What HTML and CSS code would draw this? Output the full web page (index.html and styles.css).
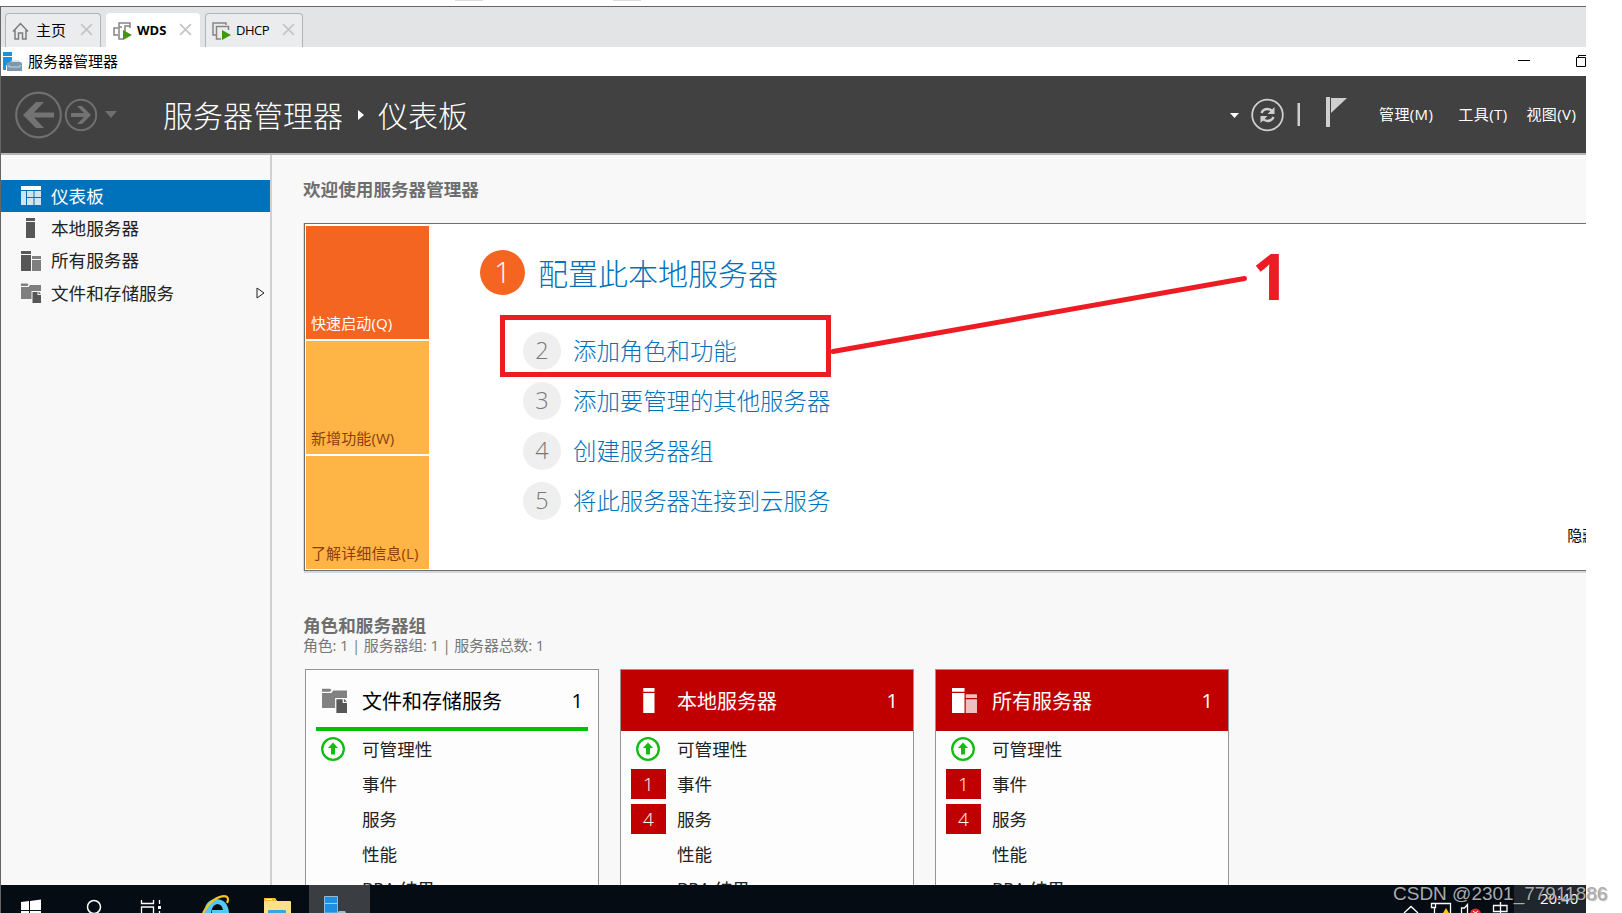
FILE: index.html
```html
<!DOCTYPE html>
<html lang="zh-CN">
    <head>
        <meta charset="utf-8">
        <title>服务器管理器</title>
        <link rel="stylesheet" href="styles.css">
    </head>
    <body>
        <svg class="symbols" width="0" height="0">
            <symbol id="server" viewBox="0 0 20 20">
                <path d="M5 0h9v3H5zM5 4h9v16H5z"/>
            </symbol>
            <symbol id="servers" viewBox="0 0 20 20">
                <path d="M0 0h10v3H0zM0 4h10v16H0z"/>
                <path opacity=".75" d="M11 5h9v3h-9zM11 9h9v11h-9z"/>
            </symbol>
            <symbol id="files" viewBox="0 0 20 20">
                <path opacity=".75" d="M0 .5h6.500l1 1-1 1.500H0zM0 4h7.500l1.500-2h11v6h-9.500v8H0z"/>
                <path d="M11.500 9h5v3H20v8h-8.500zM17.500 8.500l2.500 2.500h-2.500z"/>
            </symbol>
            <symbol id="close" viewBox="0 0 12 12">
                <path d="M1 1l10 10M11 1L1 11" fill="none" stroke="#c6c6c8" stroke-width="1.700"/>
            </symbol>
            <symbol id="up" viewBox="0 0 24 24">
                <circle cx="12" cy="12" r="10.800" fill="#fff" stroke="#10bd10" stroke-width="2.300"/>
                <path d="M12 5.500l5 5.500h-3v6.500h-4V11H7z" fill="#10bd10"/>
            </symbol>
        </svg>

        <div class="scraps"><span></span><span></span></div>

        <div class="window">
            <div class="tabs">
                <div class="tab tab-home">
                    <svg width="17" height="18" viewBox="0 0 17 18"><path d="M1 9.500L8.500 1.500 16 9.500M3 8v9h3.500v-6h4v6H14V8" fill="none" stroke="#7c7c7c" stroke-width="1.500"/></svg>
                    <span class="tab-name">主页</span>
                    <svg class="close" width="13" height="13"><use href="#close"/></svg>
                </div>
                <div class="tab tab-wds active">
                    <svg width="19" height="18" viewBox="0 0 19 18"><g fill="none" stroke="#858585" stroke-width="1.500"><path d="M5 13H1V6h4M6 5V1h11v5M10 17H6V5h3"/><path d="M17 4h-5v6"/></g><path d="M10 8l9 5-9 5z" fill="#3f9a0f"/></svg>
                    <span class="tab-name">WDS</span>
                    <svg class="close" width="13" height="13"><use href="#close"/></svg>
                </div>
                <div class="tab tab-dhcp">
                    <svg width="19" height="18" viewBox="0 0 19 18"><g fill="none" stroke="#858585" stroke-width="1.500"><path d="M4 13H1V1h13v2"/><path d="M9 17H4.500V4.500h12V8"/></g><path d="M10 8l9 5-9 5z" fill="#3f9a0f"/></svg>
                    <span class="tab-name">DHCP</span>
                    <svg class="close" width="13" height="13"><use href="#close"/></svg>
                </div>
            </div>

            <div class="titlebar">
                <svg width="20" height="20" viewBox="0 0 20 20"><path d="M0 0h9v4H0zM0 5h9v6H5L3 14v4H0z" fill="#1e8fdd"/><path d="M8 11V9h8v2" fill="none" stroke="#b9c7d2"/><path d="M4 12q0-2 2-2h11q2 0 2 2v7H4z" fill="#7c98ac"/><path d="M6 13v2h11v-2" fill="none" stroke="#c9d6df"/></svg>
                <span class="titlebar-name">服务器管理器</span>
                <svg class="minimize" width="12" height="10" viewBox="0 0 12 10"><path d="M0 3.500h12" stroke="#000"/></svg>
                <svg class="restore" width="10" height="14" viewBox="0 0 10 14"><path d="M.5 2.500h9v9h-9zM2.500 2.500v-2H10" fill="none" stroke="#000"/></svg>
            </div>

            <div class="header">
                <svg class="nav" width="110" height="50" viewBox="0 0 110 50">
                    <g fill="none" stroke="#6f6f6f">
                        <circle cx="25.500" cy="25" r="22.300" stroke-width="2.200"/>
                        <circle cx="68" cy="25" r="15.200" stroke-width="2"/>
                    </g>
                    <path d="M10 25l13-13h8L21 22.500h20v5H21L31 38h-8z" fill="#737373"/>
                    <path d="M78 25l-9 9h-5l7-7H58v-4h13l-7-7h5z" fill="#737373"/>
                    <path d="M92 21h12l-6 7z" fill="#6f6f6f"/>
                </svg>
                <div class="crumbs">
                    <span>服务器管理器</span>
                    <svg width="6" height="10" viewBox="0 0 6 10"><path d="M0 0l6 5-6 5z" fill="#fff"/></svg>
                    <span>仪表板</span>
                </div>
                <svg class="tools" width="120" height="40" viewBox="0 0 120 40">
                    <path d="M0 18h9l-4.500 5z" fill="#fff"/>
                    <circle cx="37.500" cy="20" r="15.300" fill="none" stroke="#cfcfcf" stroke-width="1.800"/>
                    <g fill="none" stroke="#cfcfcf" stroke-width="2.500"><path d="M31.500 18q1.500-4 6-4 3 0 5 2.500M43.500 22q-1.500 4-6 4-3 0-5-2.500"/></g>
                    <path d="M44.500 12v7h-7zM30.500 28v-7h7z" fill="#cfcfcf"/>
                    <path d="M67.500 8H70v23h-2.500z" fill="#cfcfcf"/>
                    <path d="M96 2h4v30h-4zM101 3h16l-16 15z" fill="#cfcfcf"/>
                </svg>
                <div class="menu">
                    <span>管理(M)</span>
                    <span>工具(T)</span>
                    <span>视图(V)</span>
                </div>
            </div>

            <div class="body">
                <div class="sidebar">
                    <div class="side-item selected">
                        <svg width="20" height="20" viewBox="0 0 20 20"><path d="M0 0h20v4H0z" fill="#fff"/><path d="M0 5h5v14H0zM6 5h6.500v6H6zM13.500 5H20v6h-6.500zM6 12h6.500v7H6zM13.500 12H20v7h-6.500z" fill="#cfe5f4"/></svg>
                        <span>仪表板</span>
                    </div>
                    <div class="side-item">
                        <svg width="20" height="20"><use href="#server"/></svg>
                        <span>本地服务器</span>
                    </div>
                    <div class="side-item">
                        <svg width="20" height="20"><use href="#servers"/></svg>
                        <span>所有服务器</span>
                    </div>
                    <div class="side-item">
                        <svg width="20" height="20"><use href="#files"/></svg>
                        <span>文件和存储服务</span>
                        <svg class="expand" width="9" height="12" viewBox="0 0 9 12"><path d="M1 1l7 5-7 5z" fill="none" stroke="#222"/></svg>
                    </div>
                </div>

                <div class="main">
                    <h2>欢迎使用服务器管理器</h2>
                    <div class="welcome">
                        <div class="tiles">
                            <div class="tile quick">快速启动(Q)</div>
                            <div class="tile">新增功能(W)</div>
                            <div class="tile">了解详细信息(L)</div>
                        </div>
                        <div class="steps">
                            <div class="step first"><b>1</b><span>配置此本地服务器</span></div>
                            <div class="step"><b>2</b><span>添加角色和功能</span></div>
                            <div class="step"><b>3</b><span>添加要管理的其他服务器</span></div>
                            <div class="step"><b>4</b><span>创建服务器组</span></div>
                            <div class="step"><b>5</b><span>将此服务器连接到云服务</span></div>
                        </div>
                        <span class="hide">隐藏</span>
                    </div>

                    <h2 class="groups-title">角色和服务器组</h2>
                    <p class="groups-info">角色: 1 | 服务器组: 1 | 服务器总数: 1</p>
                    <div class="cards">
                        <div class="card ok">
                            <div class="card-head"><svg width="25" height="25"><use href="#files"/></svg><span>文件和存储服务</span><span class="count">1</span></div>
                            <div class="row"><i><svg width="24" height="24"><use href="#up"/></svg></i><span>可管理性</span></div>
                            <div class="row"><i></i><span>事件</span></div>
                            <div class="row"><i></i><span>服务</span></div>
                            <div class="row"><i></i><span>性能</span></div>
                            <div class="row"><i></i><span>BPA 结果</span></div>
                        </div>
                        <div class="card">
                            <div class="card-head"><svg width="25" height="25"><use href="#server"/></svg><span>本地服务器</span><span class="count">1</span></div>
                            <div class="row"><i><svg width="24" height="24"><use href="#up"/></svg></i><span>可管理性</span></div>
                            <div class="row"><i class="alert">1</i><span>事件</span></div>
                            <div class="row"><i class="alert">4</i><span>服务</span></div>
                            <div class="row"><i></i><span>性能</span></div>
                            <div class="row"><i></i><span>BPA 结果</span></div>
                        </div>
                        <div class="card">
                            <div class="card-head"><svg width="25" height="25"><use href="#servers"/></svg><span>所有服务器</span><span class="count">1</span></div>
                            <div class="row"><i><svg width="24" height="24"><use href="#up"/></svg></i><span>可管理性</span></div>
                            <div class="row"><i class="alert">1</i><span>事件</span></div>
                            <div class="row"><i class="alert">4</i><span>服务</span></div>
                            <div class="row"><i></i><span>性能</span></div>
                            <div class="row"><i></i><span>BPA 结果</span></div>
                        </div>
                    </div>
                </div>
            </div>

            <div class="taskbar">
                <svg width="308" height="28" viewBox="1 0 308 28">
                    <path d="M21 17l8-1v9h-8zM30 16l11-1.500V25H30zM21 26h8v2h-8zM30 26h11v2H30z" fill="#fff"/>
                    <circle cx="94" cy="22" r="6.500" fill="none" stroke="#fff" stroke-width="1.500"/>
                    <path d="M141.500 15v3.500h12V15M141.500 28v-6h12v6M159.500 15v4M159.500 26v2" fill="none" stroke="#fff" stroke-width="1.300"/>
                    <path d="M158 21h3v3h-3z" fill="#fff"/>
                    <path d="M204 28q1-14 13-14 11 1 12 14h-17v-3h11q-1-6-6-6-5 1-6 9z" fill="#55c8f2"/>
                    <path d="M203 28q6-11 14-15 7-3 10-1 2 2 0 6" fill="none" stroke="#f6c521" stroke-width="2.200"/>
                    <path d="M264 14q0-1 1-1h10l2 3h13q1 0 1 1v11h-27z" fill="#ffe08a"/>
                    <path d="M264 13h11l2 3h-13z" fill="#f3bd32"/>
                    <path d="M266 14.500h6" stroke="#fff"/>
                    <path d="M268 28v-2q0-1 1-1h16q1 0 1 1v2z" fill="#35a7dc"/>
                </svg>
                <div class="running">
                    <svg width="24" height="17" viewBox="0 0 24 17"><path d="M.5.5h13V17H.5z" fill="#1f8fe0" stroke="#8fbbd9"/><path d="M1 7.500h12" stroke="#9fd0ef"/><path d="M13 17l2-2h6l1 2z" fill="#a7bac6"/></svg>
                </div>
                <svg class="tray" width="110" height="28" viewBox="1400 0 110 28">
                    <g fill="none" stroke="#fff" stroke-width="1.300">
                        <path d="M1404 28l7-6.500 7 6.500"/>
                        <path d="M1436 18.500h14.500V28M1434.500 23v5M1431.500 18.500h4v4h-4z"/>
                        <path d="M1461.500 28v-5h3l3-3.500V28"/>
                        <path d="M1493.500 20.500h13.500v6h-13.500zM1500.500 17v11"/>
                    </g>
                    <path d="M1446 23l3 5h-6z" fill="#ffc20e"/>
                    <circle cx="1475.500" cy="29" r="5.500" fill="#e02b35"/>
                    <path d="M1473 26l5 4M1478 26l-5 4" stroke="#fff"/>
                </svg>
                <div class="clock">20:40</div>
            </div>
        </div>

        <!-- red marks drawn over the window -->
        <div class="mark-box"></div>
        <svg class="mark-line" width="422" height="84" viewBox="0 0 422 84"><path d="M5 78.500L416.500 5.500" stroke="#ed1c24" stroke-width="5" stroke-linecap="round"/></svg>
        <div class="mark-number">1</div>
        <div class="watermark">CSDN @2301_77911886</div>
    </body>
</html>
```
FILE: styles.css
```css
* {
    box-sizing: border-box;
}
body {
    margin: 0;
    width: 1622px;
    height: 913px;
    overflow: hidden;
    position: relative;
    background: #fff;
    font-family: "Open Sans", "Noto Sans CJK SC", sans-serif;
    color: #000;
}
svg {
    display: block;
    flex: none;
}
.symbols {
    position: absolute;
}
span {
    white-space: nowrap;
}
.scraps {
    display: flex;
    gap: 130px;
    height: 6px;
    padding-left: 455px;
}
.scraps span {
    width: 28px;
    height: 1px;
    background: #dcdcdc;
}

.window {
    width: 1586px;
    height: 907px;
    overflow: hidden;
    display: flex;
    flex-direction: column;
    border-left: 1px solid #666;
    border-top: 1px solid #666;
}

/* tabs */
.tabs {
    display: flex;
    align-items: flex-end;
    height: 40px;
    padding-left: 4px;
    background: #e3e4e6;
}
.tab {
    display: flex;
    align-items: center;
    height: 34px;
    padding: 0 7px;
    border: 1px solid #b2b3b5;
    border-bottom: 0;
    border-radius: 4px 4px 0 0;
    background: #ebecee;
    font-size: 13px;
}
.tab-home {
    width: 96px;
    margin-right: 5px;
    padding-left: 6px;
}
.tab-home .tab-name {
    margin-left: 7px;
    font-size: 15px;
}
.tab-wds {
    width: 94px;
    margin-right: 5px;
    padding: 0 7px 0 6px;
    font-weight: bold;
}
.tab-dhcp {
    width: 98px;
    padding-left: 6px;
}
.tab-dhcp .tab-name {
    letter-spacing: -0.5px;
}
.tab.active {
    background: #fff;
    border-color: #fff;
}
.tab-name {
    margin-left: 5px;
    padding-bottom: 2px;
    line-height: 20px;
}
.tab .close {
    margin-left: auto;
    margin-bottom: 2px;
}

.titlebar {
    display: flex;
    align-items: center;
    height: 29px;
    padding-left: 2px;
    font-size: 15px;
    flex: none;
}
.titlebar-name {
    margin-left: 5px;
    padding-bottom: 2px;
    line-height: 20px;
}
.minimize {
    margin-left: auto;
    margin-right: 46px;
}

/* dark header */
.header {
    display: flex;
    align-items: center;
    height: 79px;
    flex: none;
    padding: 0 10px 0 12px;
    background: #414141;
    border-bottom: 2px solid #b5b5b5;
    color: #fff;
}
.crumbs {
    display: flex;
    align-items: center;
    margin-left: 40px;
    font-size: 30px;
    font-weight: 300;
    line-height: 40px;
}
.crumbs span {
    padding-top: 2px;
}
.crumbs svg {
    margin: 0 14px 0 15px;
}
.tools {
    margin-left: auto;
    margin-right: 29px;
}
.menu {
    display: flex;
    width: 197px;
    gap: 25px;
    padding-bottom: 2px;
    font-size: 15px;
    letter-spacing: 0.4px;
}
.menu span:last-child {
    margin-left: -6px;
}

.body {
    display: flex;
    height: 730px;
    flex: none;
    background: #f8f8f8;
}
.sidebar {
    width: 271px;
    flex: none;
    padding-top: 25px;
    border-right: 2px solid #d0d0d0;
}
.side-item {
    display: flex;
    align-items: center;
    height: 32.3px;
    padding: 0 5px 0 20px;
    font-size: 17.6px;
    color: #222;
    fill: #575757;
}
.side-item span {
    margin-left: 10px;
    padding-bottom: 1.5px;
}
.side-item.selected {
    background: #0072bc;
    color: #fff;
}
.expand {
    margin-left: auto;
}

.main {
    flex: 1;
    min-width: 0;
    padding: 21px 0 0 31px;
}
h2 {
    margin: 0;
    font-size: 17.6px;
    line-height: 26px;
    color: #6e6e6e;
}
.welcome {
    display: flex;
    width: 1400px;
    height: 348px;
    margin: 21px 0 0 1px;
    padding: 2px 1px 1px;
    background: #fff;
    border: 1px solid #6e6e6e;
    box-shadow: 0 2px 0 #d8d8d8, -1px 0 0 #d8d8d8;
}
.tiles {
    display: flex;
    flex-direction: column;
    gap: 2px;
    width: 123px;
}
.tile {
    display: flex;
    flex: 1;
    align-items: flex-end;
    padding: 0 0 5px 5px;
    background: #ffb445;
    color: #8b3e0d;
    font-size: 15px;
    line-height: 22px;
    letter-spacing: 0.1px;
    white-space: nowrap;
}
.tile.quick {
    background: #f46522;
    color: #fff;
}
.steps {
    padding: 24px 0 0 51px;
    color: #0072bc;
    font-weight: 300;
}
.step {
    display: flex;
    align-items: center;
    height: 50px;
    padding-left: 43px;
    font-size: 23.4px;
}
.step span {
    padding-bottom: 2px;
}
.step b {
    width: 38px;
    height: 38px;
    margin-right: 12px;
    border-radius: 50%;
    background: #efefef;
    color: #777;
    font-weight: 300;
    line-height: 37px;
    text-align: center;
}
.step.first {
    height: 45px;
    margin-bottom: 31px;
    padding-left: 0;
    font-size: 30px;
}
.step.first b {
    width: 45px;
    height: 45px;
    margin-right: 13px;
    background: #f46522;
    color: #fff;
    line-height: 44px;
}
.hide {
    margin: 298px 0 0 737px;
    font-size: 15px;
    line-height: 22px;
}

.groups-title {
    margin-top: 41px;
}
.groups-info {
    margin: -3px 0 0;
    font-size: 15px;
    line-height: 20px;
    letter-spacing: -0.2px;
    color: #777;
}
.cards {
    display: flex;
    gap: 21px;
    margin: 14px 0 0 2px;
}
.card {
    width: 294px;
    height: 260px;
    border: 1px solid #969696;
    background: #fdfdfd;
}
.card-head {
    display: flex;
    align-items: center;
    height: 61px;
    padding: 0 15px 0 16px;
    background: #c00000;
    color: #fff;
    fill: #fff;
    font-size: 20px;
}
.card-head span {
    margin-left: 15px;
}
.card-head .count {
    margin-left: auto;
}
.card.ok .card-head {
    margin: 0 10px;
    padding: 4px 5px 0 6px;
    background: none;
    border-bottom: 4px solid #00c000;
    color: #000;
    fill: #575757;
}
.row {
    display: flex;
    align-items: center;
    height: 35px;
    padding-left: 10px;
    font-size: 17.6px;
    color: #222;
}
.row i {
    width: 35px;
    height: 30px;
    margin-right: 11px;
    padding: 3px 5px;
    font-style: normal;
}
.row i.alert {
    padding: 0;
    background: #c00000;
    color: #fff;
    font-size: 19px;
    font-weight: 300;
    line-height: 30px;
    text-align: center;
}

.taskbar {
    display: flex;
    height: 28px;
    flex: none;
    background: #050c13;
}
.running {
    width: 61px;
    padding: 11px 0 0 15px;
    background: #3a3d42;
}
.tray {
    margin-left: auto;
    margin-right: 4px;
}
.clock {
    width: 72px;
    padding-left: 26px;
    background: #1f262d;
    color: #fff;
    font-size: 15px;
    line-height: 26px;
}

.mark-box {
    position: absolute;
    left: 500px;
    top: 315px;
    width: 331px;
    height: 62px;
    border: 5px solid #ed1c24;
}
.mark-line {
    position: absolute;
    left: 828px;
    top: 273px;
}
.mark-number {
    position: absolute;
    left: 1252px;
    top: 238px;
    color: #ed1c24;
    font-family: "Noto Sans", sans-serif;
    font-size: 65px;
    font-weight: bold;
    line-height: 74px;
}
.watermark {
    position: absolute;
    left: 1393px;
    top: 882px;
    color: #a9abad;
    font-family: "Liberation Sans", sans-serif;
    font-size: 19px;
    line-height: 24px;
    text-shadow: 1px 1px 1px rgba(0, 0, 0, 0.3);
    white-space: nowrap;
}
```
